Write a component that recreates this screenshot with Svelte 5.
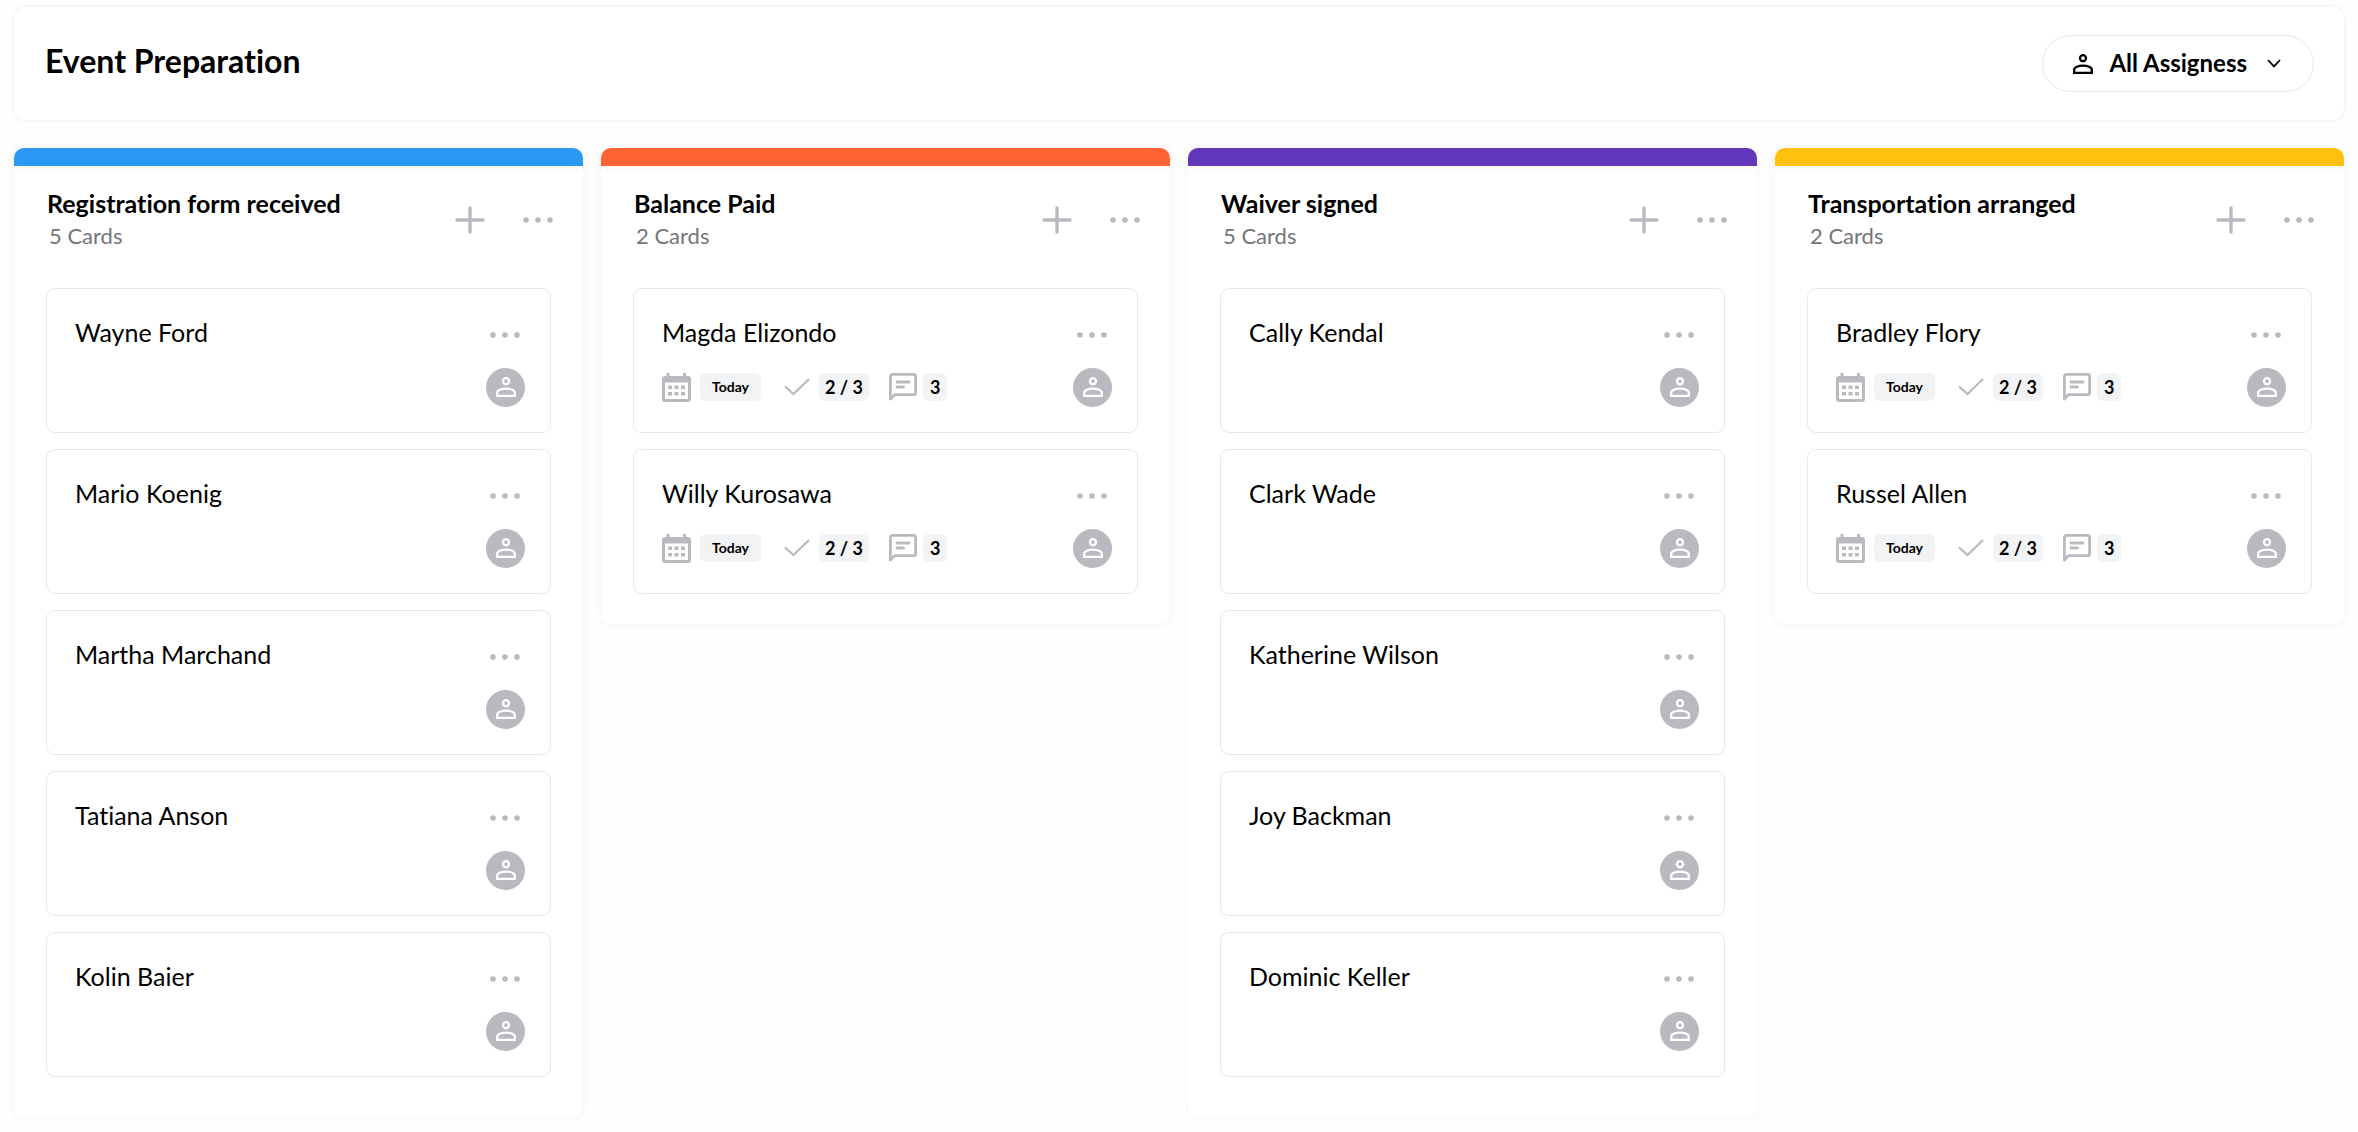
<script>
  const columns = [
    {
      title: 'Registration form received',
      tone: 'blue',
      cards: ['Wayne Ford', 'Mario Koenig', 'Martha Marchand', 'Tatiana Anson', 'Kolin Baier'],
      details: false
    },
    { title: 'Balance Paid', tone: 'orange', cards: ['Magda Elizondo', 'Willy Kurosawa'], details: true },
    {
      title: 'Waiver signed',
      tone: 'purple',
      cards: ['Cally Kendal', 'Clark Wade', 'Katherine Wilson', 'Joy Backman', 'Dominic Keller'],
      details: false
    },
    { title: 'Transportation arranged', tone: 'yellow', cards: ['Bradley Flory', 'Russel Allen'], details: true }
  ];
</script>

{#snippet person()}
  <svg class="person" viewBox="0 0 20 20" fill="none" stroke="currentColor" stroke-width="2.3" aria-hidden="true">
    <circle cx="10" cy="4.2" r="3" />
    <path d="M1.2 18.8V15.6C1.2 13.2 5.4 11.6 10 11.6S18.8 13.2 18.8 15.6V18.8Z" />
  </svg>
{/snippet}

{#snippet dots()}
  <svg class="dots" viewBox="0 0 30 6" fill="currentColor" aria-hidden="true">
    <circle cx="3" cy="3" r="2.8" /><circle cx="15" cy="3" r="2.8" /><circle cx="27" cy="3" r="2.8" />
  </svg>
{/snippet}

<div class="page">
  <header class="topbar">
    <h1>Event Preparation</h1>
    <button class="assignees" type="button">
      {@render person()}
      <span>All Assigness</span>
      <svg class="chevron" viewBox="0 0 14 9" fill="none" stroke="currentColor" stroke-width="1.8" aria-hidden="true">
        <path d="M1 1L7 7.4L13 1" />
      </svg>
    </button>
  </header>

  <main class="board">
    {#each columns as column}
      <section class="column" class:long={column.cards.length > 2}>
        <div class="stripe {column.tone}"></div>
        <div class="head">
          <div>
            <h2>{column.title}</h2>
            <p>{column.cards.length} Cards</p>
          </div>
          <div class="actions">
            <button type="button" aria-label="Add card">
              <svg class="plus" viewBox="0 0 30 28" fill="none" stroke="currentColor" stroke-width="3.4" stroke-linecap="round" aria-hidden="true">
                <path d="M15 2V26M2 14H28" />
              </svg>
            </button>
            <button type="button" aria-label="List options">{@render dots()}</button>
          </div>
        </div>
        <ul>
          {#each column.cards as name}
            <li class="card">
              <div class="row">
                <h3>{name}</h3>
                <button type="button" aria-label="Card options">{@render dots()}</button>
              </div>
              <div class="row foot">
                {#if column.details}
                  <div class="meta">
                    <svg class="calendar" viewBox="0 0 29 29" aria-hidden="true">
                      <path fill="currentColor" fill-rule="evenodd" d="M4.5 0H7.5V3H21V0H24V3H26A3 3 0 0 1 29 6V26A3 3 0 0 1 26 29H3A3 3 0 0 1 0 26V6A3 3 0 0 1 3 3H4.5ZM3 9.5V26H26V9.5Z" />
                      <path fill="currentColor" d="M6 12.5H10V16H6ZM12.5 12.5H16.5V16H12.5ZM19 12.5H23V16H19ZM6 19H10V22.5H6ZM12.5 19H16.5V22.5H12.5ZM19 19H23V22.5H19Z" />
                    </svg>
                    <span class="chip today">Today</span>
                    <svg class="check" viewBox="0 0 26 18" fill="none" stroke="currentColor" stroke-width="2.2" aria-hidden="true">
                      <path d="M1 8.5L9.5 16L25 1" />
                    </svg>
                    <span class="chip">2 / 3</span>
                    <svg class="comment" viewBox="0 0 28 28" fill="none" stroke="currentColor" stroke-width="2.8" aria-hidden="true">
                      <path stroke-linejoin="round" d="M1.4 26V3.4A2 2 0 0 1 3.4 1.4H24.6A2 2 0 0 1 26.6 3.4V19.7A2 2 0 0 1 24.6 21.7H5.5Z" />
                      <path stroke-linecap="round" d="M8 9H20M8 14H14.5" />
                    </svg>
                    <span class="chip count">3</span>
                  </div>
                {/if}
                <button class="avatar" type="button" aria-label="Assign person">{@render person()}</button>
              </div>
            </li>
          {/each}
        </ul>
      </section>
    {/each}
  </main>
</div>

<style>
  :global(body) {
    background: #fefefe;
  }
  .page {
    padding: 7px 14px 14px;
    font-family: Lato, 'Open Sans', sans-serif;
    font-variant-ligatures: none;
    color: #000;
  }
  h1, h2, h3, p, ul {
    margin: 0;
    padding: 0;
    font-weight: 400;
  }
  button {
    display: flex;
    align-items: center;
    justify-content: center;
    padding: 0;
    border: 0;
    background: none;
    color: #b9b9c0;
    font: inherit;
    font-variant-ligatures: none;
    cursor: pointer;
  }
  svg {
    display: block;
    flex: none;
  }
  .topbar {
    display: flex;
    align-items: flex-start;
    justify-content: space-between;
    padding: 28px 30px 28px 31px;
    border-radius: 12px;
    background: #fff;
    box-shadow: 0 0 4px rgba(0, 0, 0, 0.09);
  }
  h1 {
    font-size: 32px;
    line-height: 52px;
    font-weight: 700;
  }
  .assignees {
    height: 57px;
    padding: 0 32px 0 30px;
    border: 1px solid #e8e8e8;
    border-radius: 29px;
    color: #000;
    font-size: 24px;
    font-weight: 700;
  }
  .assignees .person {
    width: 20px;
    height: 20px;
  }
  .assignees span {
    margin: 0 20px 0 16px;
    line-height: 28px;
    padding-bottom: 2px;
  }
  .chevron {
    width: 14px;
    height: 9px;
  }
  .board {
    display: grid;
    grid-template-columns: repeat(4, 1fr);
    align-items: start;
    gap: 18px;
    margin-top: 28px;
  }
  .column {
    padding-bottom: 30px;
    border-radius: 10px;
    background: #fff;
    box-shadow: 0 0 10px rgba(0, 0, 0, 0.05);
  }
  .long {
    padding-bottom: 40px;
  }
  .stripe {
    height: 18px;
    border-radius: 10px 10px 0 0;
    box-shadow: 0 2px 10px rgba(0, 0, 0, 0.04);
  }
  .blue { background: #2b99f4; }
  .orange { background: #ff6233; }
  .purple { background: #6337bc; }
  .yellow { background: #ffc10d; }
  .head {
    display: flex;
    justify-content: space-between;
    padding: 19px 30px 0 33px;
    height: 103px;
  }
  h2 {
    font-size: 25px;
    line-height: 36px;
    font-weight: 700;
  }
  .head p {
    margin-left: 2px;
    font-size: 22px;
    line-height: 30px;
    color: #757579;
  }
  .actions {
    display: flex;
    gap: 38px;
    height: 70px;
  }
  .plus {
    width: 30px;
    height: 28px;
  }
  .dots {
    width: 30px;
    height: 6px;
  }
  ul {
    display: grid;
    gap: 16px;
    padding: 0 32px;
    list-style: none;
  }
  .card {
    box-sizing: border-box;
    height: 145px;
    padding: 25px 25px 0 28px;
    border: 1px solid #e8e8e8;
    border-radius: 9px;
    background: #fff;
  }
  .row {
    display: flex;
    align-items: flex-end;
    justify-content: space-between;
    height: 40px;
  }
  .row > button:not(.avatar) {
    height: 38px;
    padding-right: 5px;
  }
  .foot {
    align-items: center;
    margin-top: 13px;
  }
  h3 {
    align-self: flex-start;
    font-size: 25px;
    line-height: 36px;
  }
  .meta {
    display: flex;
    align-items: center;
    color: #b9b9c0;
  }
  .calendar {
    width: 29px;
    height: 29px;
  }
  .chip {
    padding: 0 6px;
    margin: 0 20px 0 9px;
    border-radius: 6px;
    background: #f2f3f5;
    color: #000;
    font-size: 18px;
    line-height: 28px;
    font-weight: 700;
  }
  .chip.today {
    padding: 0 12px;
    margin-right: 23px;
    font-size: 14px;
  }
  .chip.count {
    padding: 0 7px;
    margin-left: 6px;
  }
  .check {
    width: 26px;
    height: 18px;
  }
  .comment {
    width: 28px;
    height: 28px;
  }
  .avatar {
    width: 39px;
    height: 39px;
    margin-left: auto;
    border-radius: 50%;
    background: #b9b9c0;
    color: #fff;
  }
  .avatar .person {
    width: 20px;
    height: 20px;
  }
</style>
